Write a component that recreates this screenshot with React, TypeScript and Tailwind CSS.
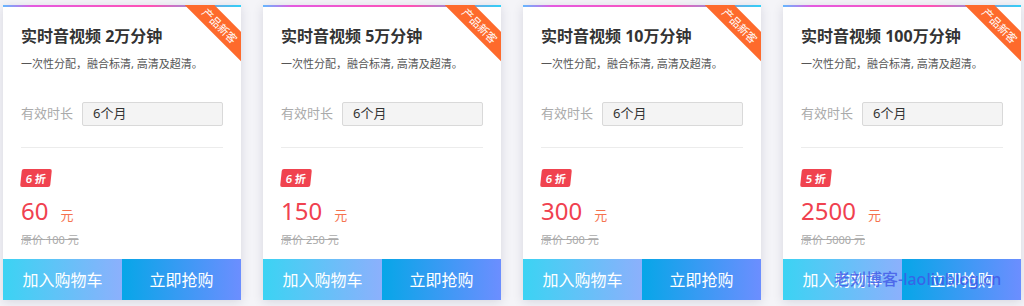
const plans = [
  { minutes: "2万", price: "60", original: "100", discount: "6" },
  { minutes: "5万", price: "150", original: "250", discount: "6" },
  { minutes: "10万", price: "300", original: "500", discount: "6" },
  { minutes: "100万", price: "2500", original: "5000", discount: "5" },
];

type Plan = (typeof plans)[number];

function PlanCard({ plan }: { plan: Plan }) {
  return (
    <div className="relative flex h-[295px] flex-col overflow-hidden bg-white shadow-[0_2px_10px_rgba(20,20,60,0.13)]">
      <div className="h-[2px] bg-[linear-gradient(90deg,#62b8ff_0%,#e45ae0_12%,#ff52b4_62%,#30d0f8_100%)]" />

      {/* corner ribbon */}
      <div className="absolute -right-[27px] top-[10px] flex h-[21px] w-24 rotate-45 items-center justify-center bg-[#fe6a2c]">
        <span className="text-[11px] leading-none text-white">产品新客</span>
      </div>

      <div className="px-[18px] pt-[17px]">
        <h3 className="text-[16px] font-bold leading-6 text-[#333]">
          实时音视频 {plan.minutes}分钟
        </h3>
        <p className="mt-[8px] text-[11px] leading-4 text-[#555]">
          一次性分配，融合标清, 高清及超清。
        </p>

        <div className="mt-[30px] flex items-center">
          <span className="w-[61px] text-[13px] text-[#aaa]">有效时长</span>
          <div className="flex h-6 flex-1 items-center rounded-[2px] border border-[#d9d9d9] bg-[#f4f4f4] pl-[10px] text-[13px] text-[#333]">
            6个月
          </div>
        </div>

        <div className="mt-[21px] h-px bg-[#ececec]" />

        <div className="mt-[21px] flex">
          <span className="flex h-[18px] w-[30px] -skew-x-6 items-center justify-center rounded-[2px] bg-[#f0434f] text-[11px] font-semibold leading-none text-white">
            {plan.discount} 折
          </span>
        </div>

        <div className="mt-[12px] flex items-baseline gap-3">
          <span className="text-[24px] leading-none text-[#f0414f]">{plan.price}</span>
          <span className="text-[13px] leading-none text-[#f5734f]">元</span>
        </div>

        <p className="mt-[10px] text-[11px] leading-[14px] text-[#aaa] line-through">
          原价 {plan.original} 元
        </p>
      </div>

      <div className="mt-auto grid h-[41px] grid-cols-2 text-[16px] text-white">
        <button className="flex items-center justify-center bg-[linear-gradient(90deg,#3bd3f3,#8cb0fc)]">
          加入购物车
        </button>
        <button className="flex items-center justify-center bg-[linear-gradient(90deg,#07a6e8,#6c8eff)]">
          立即抢购
        </button>
      </div>
    </div>
  );
}

export default function App() {
  return (
    <div className="relative min-h-[306px] bg-[#f4f4f8] px-[3px] pt-[5px] font-['Noto_Sans','Noto_Sans_CJK_SC',sans-serif]">
      <div className="grid grid-cols-4 gap-[22px]">
        {plans.map((plan) => (
          <PlanCard key={plan.minutes} plan={plan} />
        ))}
      </div>

      {/* watermark */}
      <div className="pointer-events-none absolute left-[834px] top-[267px] text-[16px] font-medium leading-6 text-[#3f55e6]/80">
        老刘博客-laoliublog.cn
      </div>
    </div>
  );
}
